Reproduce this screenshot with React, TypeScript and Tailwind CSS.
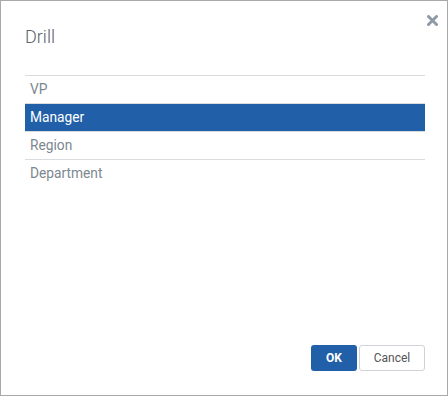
const items = ['VP', 'Manager', 'Region', 'Department']

export default function App() {
  const selected = 'Manager'

  return (
    <div className="w-[448px] h-[396px] bg-white border border-[#a9a9a9] flex flex-col font-['Roboto',sans-serif]">
      {/* Header */}
      <div className="flex items-start justify-between pl-6 pr-[9px] pt-[13px]">
        <h1 className="mt-[12px] text-[18px] font-light leading-[22px] text-[#5b6168]">Drill</h1>
        <svg width="11" height="11" viewBox="0 0 11 11" className="mt-[1px]">
          <path d="M1.5 1.5 L9.5 9.5 M9.5 1.5 L1.5 9.5" stroke="#8e9aa6" strokeWidth="3" strokeLinecap="round" />
        </svg>
      </div>

      {/* List */}
      <div className="mt-[27px] ml-6 mr-[22px] border-t border-[#d9dcdf]">
        {items.map((it, i) => (
          <div
            key={it}
            className={
              (it === selected ? 'bg-[#2160a8] text-white' : 'text-[#7d8790]') +
              (i < items.length - 1 ? ' border-b border-[#d9dcdf]' : '') +
              ' h-[28px] leading-[27px] px-[5px] text-[13.75px]'
            }
          >
            {it}
          </div>
        ))}
      </div>

      <div className="flex-1" />

      {/* Footer */}
      <div className="flex justify-end gap-[2px] pr-[22px] pb-6">
        <button className="w-[46px] h-[26px] rounded-[3px] bg-[#2160a8] text-white text-[12px] font-bold">OK</button>
        <button className="w-[66px] h-[26px] rounded-[3px] border border-[#cfd3d7] bg-white text-[#555] text-[12px]">Cancel</button>
      </div>
    </div>
  )
}
